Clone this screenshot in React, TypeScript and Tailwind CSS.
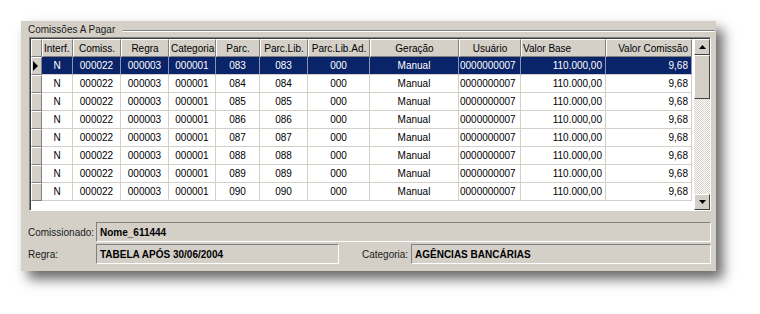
import React from "react";

type Col = { w: number; h: string; ha: "left" | "center" | "right"; da: "left" | "center" | "right" };

const cols: Col[] = [
  { w: 31, h: "Interf.", ha: "left", da: "center" },
  { w: 48, h: "Comiss.", ha: "center", da: "center" },
  { w: 48, h: "Regra", ha: "center", da: "center" },
  { w: 47, h: "Categoria", ha: "left", da: "center" },
  { w: 44, h: "Parc.", ha: "center", da: "center" },
  { w: 48, h: "Parc.Lib.", ha: "center", da: "center" },
  { w: 62, h: "Parc.Lib.Ad.", ha: "center", da: "center" },
  { w: 89, h: "Geração", ha: "center", da: "center" },
  { w: 62, h: "Usuário", ha: "center", da: "left" },
  { w: 85, h: "Valor Base", ha: "left", da: "right" },
  { w: 86, h: "Valor Comissão", ha: "right", da: "right" },
];

const rows = ["083", "084", "085", "086", "087", "088", "089", "090"].map((p) => [
  "N",
  "000022",
  "000003",
  "000001",
  p,
  p,
  "000",
  "Manual",
  "0000000007",
  "110.000,00",
  "9,68",
]);

const alignCls = (a: "left" | "center" | "right") =>
  a === "left" ? "justify-start pl-[1px]" : a === "center" ? "justify-center" : "justify-end pr-[3px]";

function Indicator({ active }: { active?: boolean }) {
  return (
    <div className="w-[11px] h-[18px] shrink-0 bg-[#d4d0c8] border-t border-l border-t-white border-l-white border-r border-b border-r-[#808080] border-b-[#808080] flex items-center justify-start">
      {active && (
        <svg width="6" height="10" viewBox="0 0 6 10" className="ml-[1px]">
          <polygon points="0,0 5,5 0,10" fill="#000" />
        </svg>
      )}
    </div>
  );
}

function ScrollBtn({ dir }: { dir: "up" | "down" }) {
  return (
    <div className="w-[16px] h-[16px] shrink-0 bg-[#d4d0c8] border border-t-white border-l-white border-r-[#404040] border-b-[#404040] flex items-center justify-center">
      <svg width="7" height="4" viewBox="0 0 7 4">
        {dir === "up" ? (
          <polygon points="0,4 3.5,0 7,4" fill="#000" />
        ) : (
          <polygon points="0,0 3.5,4 7,0" fill="#000" />
        )}
      </svg>
    </div>
  );
}

export default function App() {
  return (
    <div
      className="w-[760px] h-[314px] bg-white pt-[21px] pl-[21px] text-[10px] text-black"
      style={{ fontFamily: '"Liberation Sans", Arial, sans-serif' }}
    >
      <div className="w-[695px] h-[250px] bg-[#d4d0c8] shadow-[7px_8px_12px_rgba(0,0,0,0.6)] flex flex-col pl-[8px]">
        {/* group header */}
        <div className="flex items-center h-[15px] pt-[3px] -ml-[1px]">
          <span className="text-[#1a1a1a] leading-[12px]">Comissões A Pagar</span>
          <div className="ml-[8px] w-[592px] h-[2px] border-t border-t-[#808080] border-b border-b-white mt-[1px]" />
        </div>
        {/* grid */}
        <div className="mt-[1px] w-[682px] h-[174px] border border-t-[#808080] border-l-[#808080] border-r-white border-b-white">
          <div className="w-full h-full bg-white flex border-t border-l border-t-[#404040] border-l-[#404040]">
            <div className="w-[661px] flex flex-col">
              {/* header */}
              <div className="flex h-[18px]">
                <Indicator />
                {cols.map((c) => (
                  <div
                    key={c.h}
                    style={{ width: c.w }}
                    className={`h-[18px] shrink-0 bg-[#d4d0c8] border-t border-l border-t-white border-l-white border-r border-b border-r-[#808080] border-b-[#808080] flex items-center whitespace-nowrap overflow-hidden ${alignCls(c.ha)}`}
                  >
                    {c.h}
                  </div>
                ))}
              </div>
              {rows.map((r, i) => (
                <div key={i} className="flex h-[18px]">
                  <Indicator active={i === 0} />
                  {r.map((v, j) => (
                    <div
                      key={j}
                      style={{ width: cols[j].w }}
                      className={`h-[18px] shrink-0 border-r border-b flex items-center whitespace-nowrap overflow-hidden ${alignCls(cols[j].da)} ${
                        i === 0 ? "bg-[#0a246a] text-white border-r-[#8a94b8] border-b-[#d4d0c8]" : "bg-white border-r-[#d4d0c8] border-b-[#d4d0c8]"
                      }`}
                    >
                      {v}
                    </div>
                  ))}
                </div>
              ))}
            </div>
            <div className="w-[2px]" />
            {/* scrollbar */}
            <div className="w-[16px] flex flex-col bg-[repeating-conic-gradient(#d4d0c8_0_25%,#ffffff_0_50%)] bg-[length:2px_2px]">
              <ScrollBtn dir="up" />
              <div className="w-[16px] h-[44px] bg-[#d4d0c8] border border-t-white border-l-white border-r-[#404040] border-b-[#404040]" />
              <div className="flex-1" />
              <ScrollBtn dir="down" />
            </div>
          </div>
        </div>
        {/* fields */}
        <div className="mt-[11px] flex items-center h-[20px] -ml-[1px]">
          <span className="w-[68px] text-[#1a1a1a]">Comissionado:</span>
          <div className="w-[615px] h-[20px] border border-t-[#808080] border-l-[#808080] border-r-white border-b-white flex items-center pl-[3px] font-bold">
            Nome_611444
          </div>
        </div>
        <div className="mt-[2px] flex items-center h-[20px] -ml-[1px]">
          <span className="w-[68px] text-[#1a1a1a]">Regra:</span>
          <div className="w-[243px] h-[20px] border border-t-[#808080] border-l-[#808080] border-r-white border-b-white flex items-center pl-[3px] font-bold">
            TABELA APÓS 30/06/2004
          </div>
          <span className="ml-[23px] w-[49px] text-[#1a1a1a]">Categoria:</span>
          <div className="w-[300px] h-[20px] border border-t-[#808080] border-l-[#808080] border-r-white border-b-white flex items-center pl-[3px] font-bold">
            AGÊNCIAS BANCÁRIAS
          </div>
        </div>
      </div>
    </div>
  );
}
